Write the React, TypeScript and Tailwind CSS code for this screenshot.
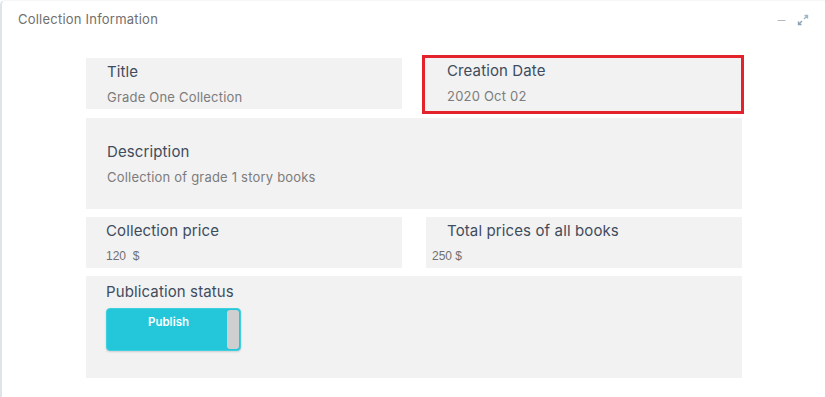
import React from "react";

const font = { fontFamily: "Inter, 'Noto Sans', sans-serif" };
const labelCls = "text-[15px] leading-[18px] tracking-[0.12px] text-[#3e4c5d]";
const valueCls = "mt-[8px] text-[13px] leading-[16px] tracking-[0.2px] text-[#7c7c7c]";

function Cell({ label, value, className = "" }: { label: string; value: string; className?: string }) {
  return (
    <div className={`flex flex-col justify-center bg-[#f2f2f2] pl-[21px] ${className}`}>
      <div className={labelCls}>{label}</div>
      <div className={valueCls}>{value}</div>
    </div>
  );
}

export default function App() {
  return (
    <div className="h-[397px] w-[825px] bg-white" style={font}>
      <div className="h-full rounded-tl-[5px] border-l-2 border-t border-[#dde4ea] border-t-[#f4f6f8]">
        <div className="flex h-[38px] items-center justify-between pl-4 pr-[16px]">
          <span className="text-[13px] tracking-[0.22px] text-[#6f6f6f]">Collection Information</span>
          <div className="flex items-center gap-[11px]">
            <svg width="9" height="10" viewBox="0 0 9 10">
              <line x1="0.5" y1="5.5" x2="8.5" y2="5.5" stroke="#b8b8b8" strokeWidth="1" />
            </svg>
            <svg width="12" height="12" viewBox="0 0 12 12" fill="none">
              <path d="M7 5 L10.5 1.5 M7.5 1.5 H10.5 V4.5" stroke="#9fb6c4" strokeWidth="1.4" />
              <path d="M5 7 L1.5 10.5 M1.5 7.5 V10.5 H4.5" stroke="#8da2b3" strokeWidth="1.4" />
            </svg>
          </div>
        </div>
        <div className="ml-[84px] mt-[19px] grid w-[656px] grid-cols-2 gap-x-6 gap-y-2">
          <Cell label="Title" value="Grade One Collection" className="h-[51px]" />
          <div className="-mb-[5px] -ml-[4px] -mr-[2px] -mt-[3px] flex h-[59px] flex-col justify-center border-[3px] border-[#e3222b] bg-[#f2f2f2] pb-[3px] pl-[22px]">
            <div className={labelCls}>Creation Date</div>
            <div className={valueCls}>2020 Oct 02</div>
          </div>
          <Cell
            label="Description"
            value="Collection of grade 1 story books"
            className="col-span-2 mt-px h-[91px]"
          />
          <div className="flex h-[51px] flex-col justify-center bg-[#f2f2f2] pl-[20px]">
            <div className={labelCls}>Collection price</div>
            <div className="mt-[8px] text-[12px] leading-[16px] text-[#707070]" style={{ fontFamily: "Arial, 'Liberation Sans', sans-serif" }}>
              120&nbsp; $
            </div>
          </div>
          <div className="flex h-[51px] flex-col justify-center bg-[#f2f2f2]">
            <div className={`pl-[21px] ${labelCls}`}>Total prices of all books</div>
            <div className="mt-[8px] pl-[6px] text-[12px] leading-[16px] text-[#707070]" style={{ fontFamily: "Arial, 'Liberation Sans', sans-serif" }}>
              250 $
            </div>
          </div>
          <div className="col-span-2 h-[102px] bg-[#f2f2f2] pl-[20px] pt-[7px]">
            <div className={labelCls}>Publication status</div>
            <div className="mt-[7px] flex h-[43px] w-[135px] rounded-[4px] border border-[#3fd0e0] bg-[#24c6da] shadow-[0_1px_2px_rgba(0,0,0,0.15)]">
              <div className="flex-1 pl-[3px] pt-[5px] text-center text-[11.5px] font-semibold text-white">Publish</div>
              <div className="my-px mr-px w-[12px] rounded-[3px] bg-[#cfcfcf]" />
            </div>
          </div>
        </div>
      </div>
    </div>
  );
}
